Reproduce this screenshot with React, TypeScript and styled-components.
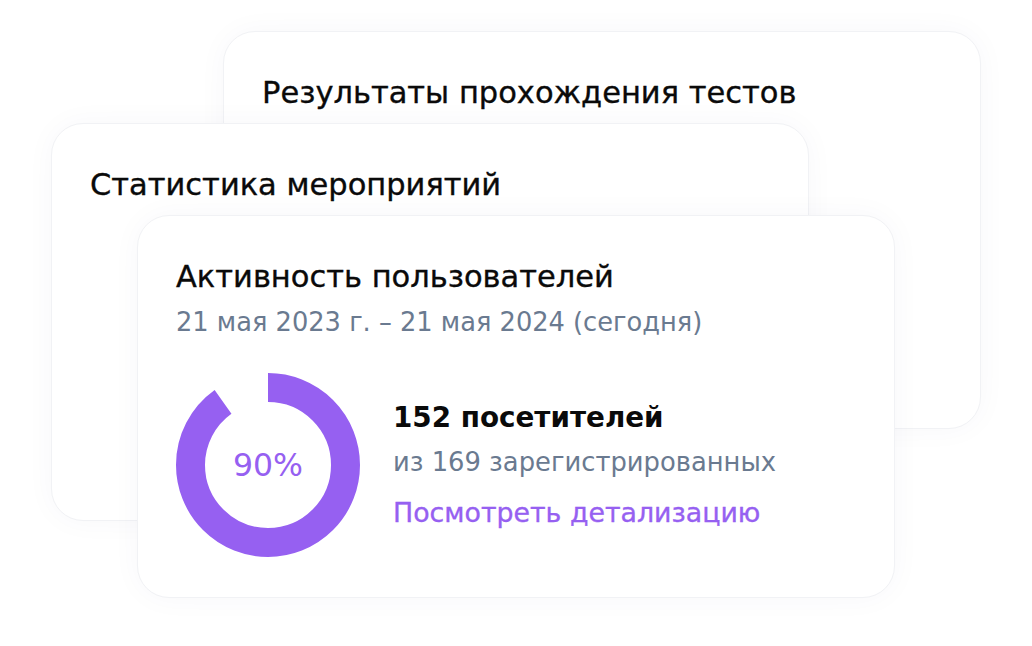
import React from 'react';
import styled, { createGlobalStyle } from 'styled-components';

const GlobalStyle = createGlobalStyle`
  html, body {
    margin: 0;
    padding: 0;
    background: #ffffff;
  }
  body {
    font-family: "DejaVu Sans", "Noto Sans", sans-serif;
    -webkit-font-smoothing: antialiased;
  }
`;

const PURPLE = '#9660f1';
const GRAY = '#6a7a90';

// the cards overlap like a stack of sheets, so they sit on a free stage
const Stage = styled.div`
  position: relative;
  width: 1032px;
  height: 646px;
  overflow: hidden;
`;

const Card = styled.section<{ $x: number; $y: number; $h: number }>`
  position: absolute;
  left: ${(p) => p.$x}px;
  top: ${(p) => p.$y}px;
  width: 758px;
  height: ${(p) => p.$h}px;
  box-sizing: border-box;
  padding: 41px 38px 0 38px;
  background: #ffffff;
  border: 1.5px solid #f1f2f5;
  border-radius: 32px;
  box-shadow: 0 0 30px rgba(60, 70, 100, 0.035);
  display: flex;
  flex-direction: column;
`;

const CardTitle = styled.h2`
  margin: 0;
  font-size: 30.5px;
  line-height: 40px;
  font-weight: 400;
  color: #0a0a0a;
  -webkit-text-stroke: 0.35px #0a0a0a;
  white-space: nowrap;
`;

const Period = styled.div`
  margin-top: 8px;
  font-size: 25.7px;
  line-height: 34px;
  color: ${GRAY};
  white-space: nowrap;
`;

const Summary = styled.div`
  margin-top: 34px;
  display: flex;
  align-items: center;
  gap: 33px;
`;

const DonutBox = styled.div`
  position: relative;
  width: 184px;
  height: 184px;
  flex: none;
`;

const DonutLabel = styled.span`
  position: absolute;
  inset: 0;
  display: flex;
  align-items: center;
  justify-content: center;
  font-size: 31.5px;
  color: ${PURPLE};
`;

const Facts = styled.div`
  display: flex;
  flex-direction: column;
  white-space: nowrap;
`;

const Visitors = styled.div`
  font-size: 27.8px;
  line-height: 36px;
  font-weight: 700;
  color: #0a0a0a;
`;

const Registered = styled.div`
  margin-top: 9px;
  font-size: 25.8px;
  line-height: 34px;
  color: ${GRAY};
`;

const DetailsLink = styled.a`
  margin-top: 17px;
  font-size: 26.8px;
  line-height: 34px;
  color: ${PURPLE};
  -webkit-text-stroke: 0.35px ${PURPLE};
  text-decoration: none;
  cursor: pointer;
`;

function Donut({ value }: { value: number }) {
  const r = 77.5;
  const c = 2 * Math.PI * r;
  return (
    <DonutBox>
      <svg width="184" height="184" viewBox="0 0 184 184">
        <circle
          cx="92"
          cy="92"
          r={r}
          fill="none"
          stroke={PURPLE}
          strokeWidth="29"
          strokeDasharray={`${c * value} ${c}`}
          transform="rotate(-90 92 92)"
        />
      </svg>
      <DonutLabel>{Math.round(value * 100)}%</DonutLabel>
    </DonutBox>
  );
}

export default function App() {
  return (
    <>
      <GlobalStyle />
      <Stage>
        <Card $x={223} $y={31} $h={398}>
          <CardTitle>Результаты прохождения тестов</CardTitle>
        </Card>
        <Card $x={51} $y={123} $h={398}>
          <CardTitle>Статистика мероприятий</CardTitle>
        </Card>
        <Card $x={137} $y={215} $h={383}>
          <CardTitle>Активность пользователей</CardTitle>
          <Period>21 мая 2023 г. – 21 мая 2024 (сегодня)</Period>
          <Summary>
            <Donut value={0.9} />
            <Facts>
              <Visitors>152 посетителей</Visitors>
              <Registered>из 169 зарегистрированных</Registered>
              <DetailsLink>Посмотреть детализацию</DetailsLink>
            </Facts>
          </Summary>
        </Card>
      </Stage>
    </>
  );
}
